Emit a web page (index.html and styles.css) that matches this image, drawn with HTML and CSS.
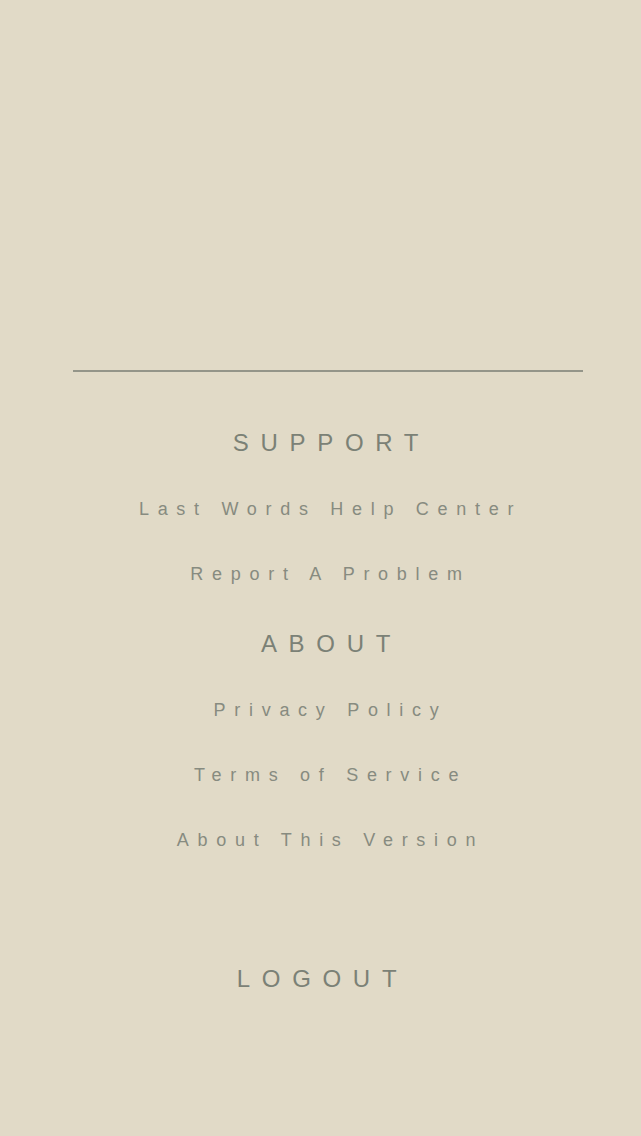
FILE: index.html
```html
<!DOCTYPE html>
<html>
<head>
<meta charset="utf-8">
<link rel="stylesheet" href="styles.css">
</head>
<body>
<main class="menu">
  <hr class="divider">
  <section class="group">
    <h2 class="heading">SUPPORT</h2>
    <a class="link">Last Words Help Center</a>
    <a class="link">Report A Problem</a>
  </section>
  <section class="group about">
    <h2 class="heading">ABOUT</h2>
    <a class="link">Privacy Policy</a>
    <a class="link">Terms of Service</a>
    <a class="link">About This Version</a>
  </section>
  <a class="logout">LOGOUT</a>
</main>
</body>
</html>
```
FILE: styles.css
```css
html, body {
  margin: 0;
  padding: 0;
  background: #e1dac7;
}
body {
  width: 641px;
  height: 1136px;
  overflow: hidden;
  font-family: "Liberation Sans", Arial, sans-serif;
  color: #7d8378;
}
.menu {
  margin-left: 73px;
  width: 510px;
  padding-top: 370px;
  display: flex;
  flex-direction: column;
}
.divider {
  margin: 0 0 36px 0;
  border: 0;
  height: 2px;
  background: #949589;
}
.group {
  display: flex;
  flex-direction: column;
}
.about {
  margin-top: 2px;
}
.heading {
  margin: 0;
  font-size: 24px;
  font-weight: normal;
  line-height: 69px;
  height: 69px;
  letter-spacing: 11.7px;
  padding-left: 7px;
  text-align: center;
  color: #7b8176;
}
.link {
  display: block;
  font-size: 18px;
  line-height: 65px;
  height: 65px;
  letter-spacing: 8.7px;
  padding-left: 5px;
  text-align: center;
  color: #878b80;
}
.logout {
  display: block;
  margin-top: 72px;
  font-size: 24px;
  line-height: 68px;
  letter-spacing: 11.7px;
  padding-right: 11px;
  text-align: center;
  color: #7b8176;
}
```
